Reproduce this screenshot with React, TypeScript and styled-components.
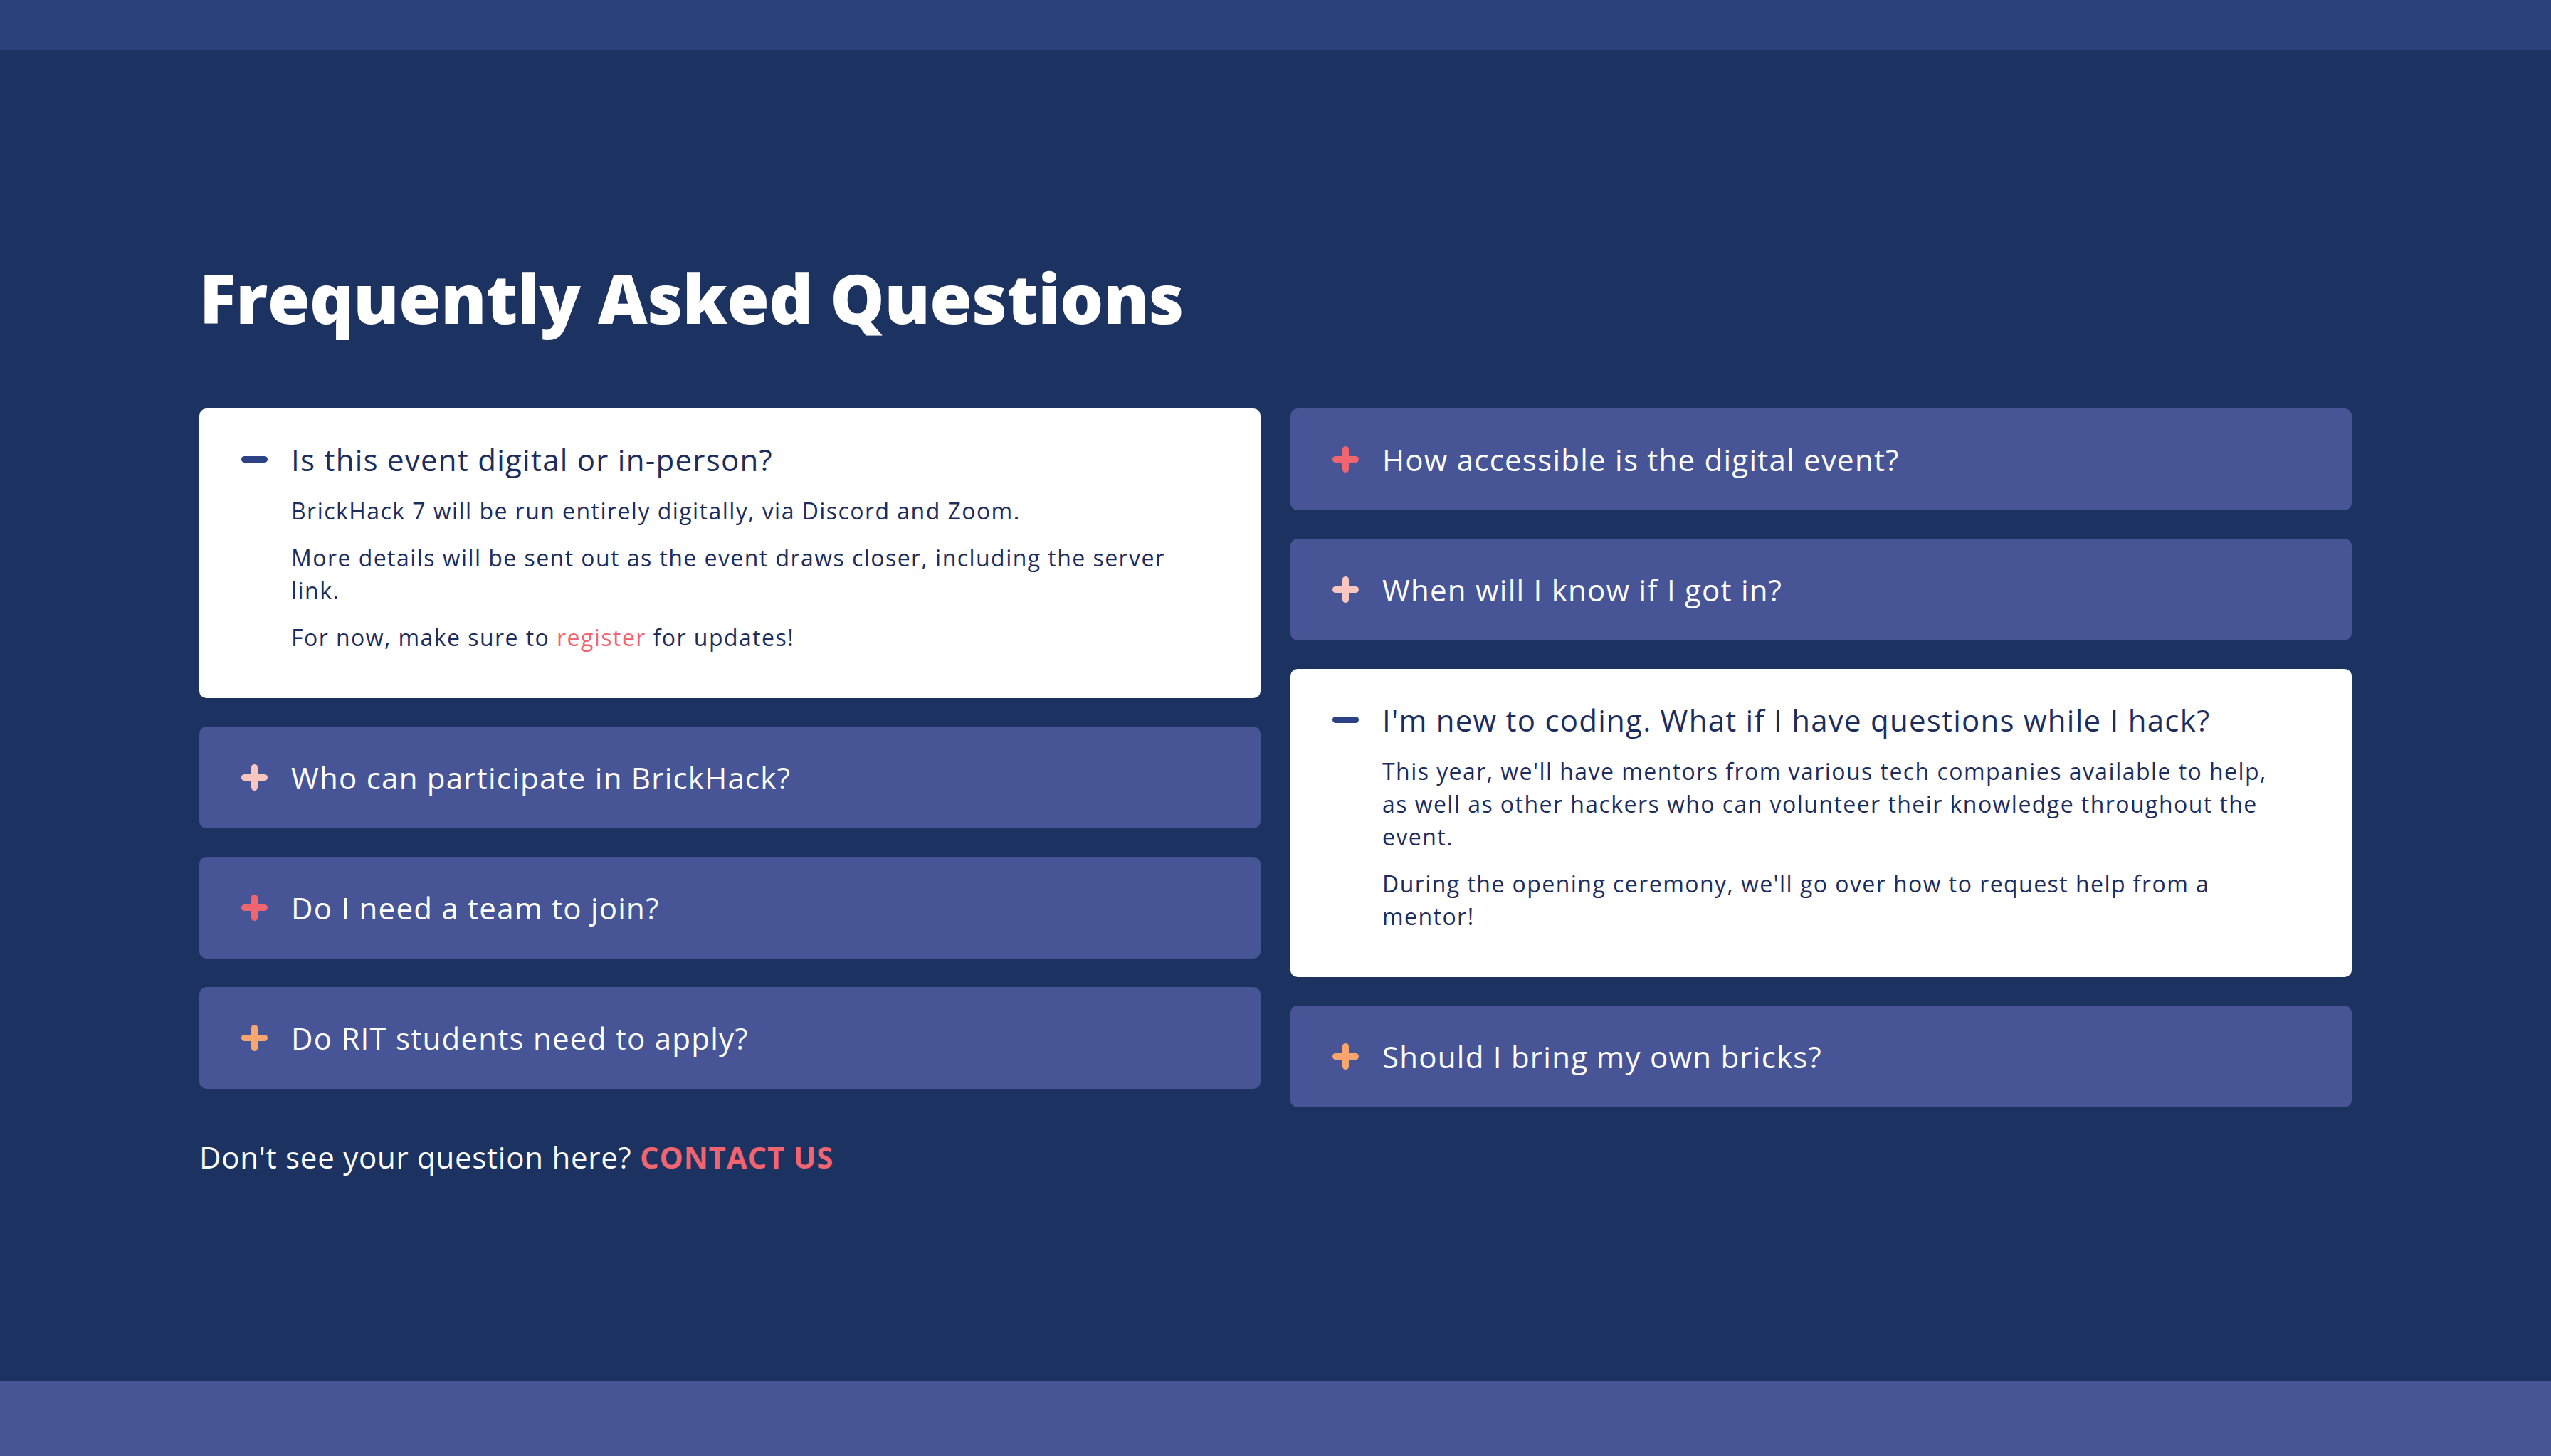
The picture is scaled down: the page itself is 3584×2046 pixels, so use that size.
import styled, { createGlobalStyle } from "styled-components"

const GlobalStyle = createGlobalStyle`
  body {
    margin: 0;
    background: #1c3260;
    font-family: "Open Sans", "Liberation Sans", sans-serif;
    overflow: hidden;
  }
  * {
    box-sizing: border-box;
  }
`

const TopBar = styled.div`
  height: 70px;
  background: #2a417c;
`

const Section = styled.section`
  min-height: 1870px;
  padding: 290px 280px 0;
  background: #1c3260;
`

const Title = styled.h1`
  margin: 0 0 99px;
  font-size: 96px;
  line-height: 115px;
  font-weight: 800;
  letter-spacing: -0.4px;
  color: #ffffff;
`

const Columns = styled.div`
  display: grid;
  grid-template-columns: 1fr 1fr;
  gap: 42px;
  align-items: start;
`

const Column = styled.div`
  display: flex;
  flex-direction: column;
  gap: 40px;
`

const Card = styled.div<{ $open: boolean }>`
  background: ${(p) => (p.$open ? "#ffffff" : "#475596")};
  border-radius: 10px;
  padding: 42px 59px;
`

const QuestionRow = styled.div`
  display: flex;
  align-items: center;
  gap: 33px;

  svg {
    flex-shrink: 0;
  }
`

const Question = styled.div<{ $open: boolean }>`
  font-size: 42px;
  line-height: 59px;
  letter-spacing: 1.25px;
  color: ${(p) => (p.$open ? "#1c2d5c" : "#ffffff")};
`

const Answer = styled.div`
  padding: 0 24px 0 70px;

  p {
    margin: 20px 0;
    font-size: 32px;
    line-height: 46px;
    letter-spacing: 1.45px;
    color: #1c2d5c;
  }
`

const Link = styled.a`
  color: #f0656f;
  text-decoration: none;
`

const Contact = styled.p`
  margin: 26px 0 0;
  font-size: 42px;
  line-height: 59px;
  letter-spacing: 0.75px;
  color: #ffffff;
`

const ContactLink = styled.a`
  color: #f0656f;
  font-weight: 700;
  text-decoration: none;
`

const BottomBar = styled.div`
  height: 106px;
  background: #475596;
`

type Faq = {
  question: string
  answer?: React.ReactNode[]
  accent: string
}

const leftFaqs: Faq[] = [
  {
    question: "Is this event digital or in-person?",
    accent: "#2b4385",
    answer: [
      "BrickHack 7 will be run entirely digitally, via Discord and Zoom.",
      "More details will be sent out as the event draws closer, including the server link.",
      <>
        For now, make sure to <Link href="#">register</Link> for updates!
      </>,
    ],
  },
  { question: "Who can participate in BrickHack?", accent: "#fbc6be" },
  { question: "Do I need a team to join?", accent: "#f0656f" },
  { question: "Do RIT students need to apply?", accent: "#f9a66e" },
]

const rightFaqs: Faq[] = [
  { question: "How accessible is the digital event?", accent: "#f0656f" },
  { question: "When will I know if I got in?", accent: "#fbc6be" },
  {
    question: "I'm new to coding. What if I have questions while I hack?",
    accent: "#2b4385",
    answer: [
      "This year, we'll have mentors from various tech companies available to help, as well as other hackers who can volunteer their knowledge throughout the event.",
      "During the opening ceremony, we'll go over how to request help from a mentor!",
    ],
  },
  { question: "Should I bring my own bricks?", accent: "#f9a66e" },
]

const ToggleIcon = ({ open, color }: { open: boolean; color: string }) => (
  <svg width="37" height="37" viewBox="0 0 37 37">
    <line x1="4.5" y1="18.5" x2="32.5" y2="18.5" stroke={color} strokeWidth="9" strokeLinecap="round" />
    {!open && <line x1="18.5" y1="4.5" x2="18.5" y2="32.5" stroke={color} strokeWidth="9" strokeLinecap="round" />}
  </svg>
)

const FaqCard = ({ faq }: { faq: Faq }) => {
  const open = !!faq.answer
  return (
    <Card $open={open}>
      <QuestionRow>
        <ToggleIcon open={open} color={faq.accent} />
        <Question $open={open}>{faq.question}</Question>
      </QuestionRow>
      {open && (
        <Answer>
          {faq.answer!.map((p, i) => (
            <p key={i}>{p}</p>
          ))}
        </Answer>
      )}
    </Card>
  )
}

export default function App() {
  return (
    <>
      <GlobalStyle />
      <TopBar />
      <Section>
        <Title>Frequently Asked Questions</Title>
        <Columns>
          <Column>
            {leftFaqs.map((f) => (
              <FaqCard key={f.question} faq={f} />
            ))}
            <Contact>
              Don't see your question here? <ContactLink href="#">CONTACT US</ContactLink>
            </Contact>
          </Column>
          <Column>
            {rightFaqs.map((f) => (
              <FaqCard key={f.question} faq={f} />
            ))}
          </Column>
        </Columns>
      </Section>
      <BottomBar />
    </>
  )
}
